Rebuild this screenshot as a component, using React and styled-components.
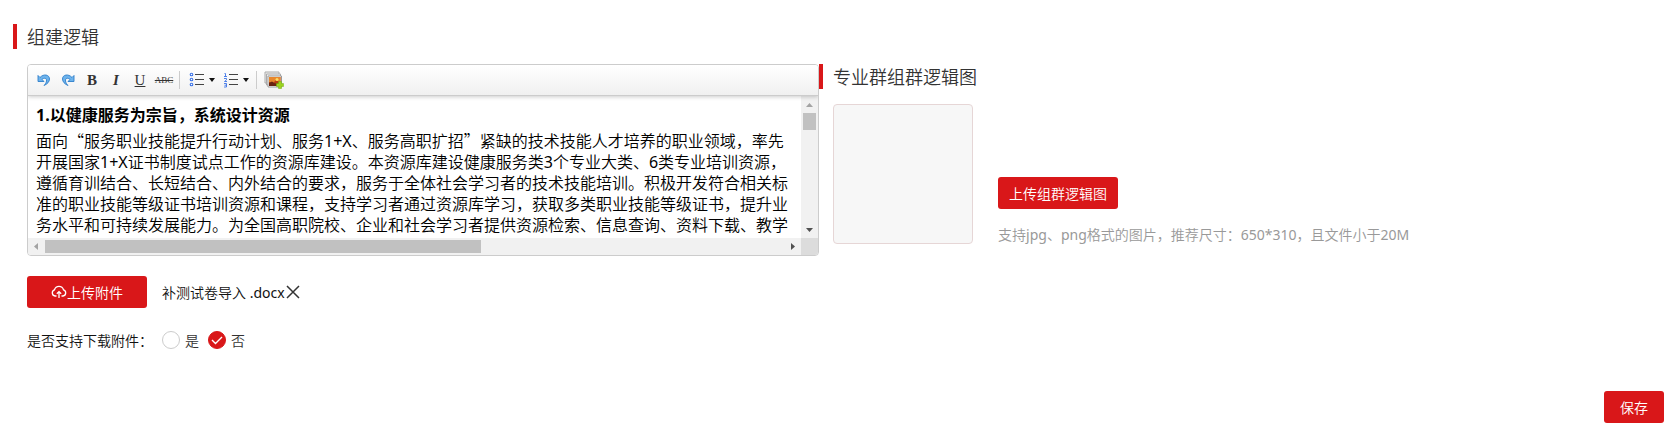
import React, { useState } from "react";
import styled, { createGlobalStyle } from "styled-components";

const lines = [
  "面向“服务职业技能提升行动计划、服务1+X、服务高职扩招”紧缺的技术技能人才培养的职业领域，率先",
  "开展国家1+X证书制度试点工作的资源库建设。本资源库建设健康服务类3个专业大类、6类专业培训资源，",
  "遵循育训结合、长短结合、内外结合的要求，服务于全体社会学习者的技术技能培训。积极开发符合相关标",
  "准的职业技能等级证书培训资源和课程，支持学习者通过资源库学习，获取多类职业技能等级证书，提升业",
  "务水平和可持续发展能力。为全国高职院校、企业和社会学习者提供资源检索、信息查询、资料下载、教学",
];

// the Chinese text is set a little lighter than the latin runs inside it
const mixed = (text) =>
  text
    .split(/([\x20-\x7e]+)/)
    .map((part, i) => (i % 2 ? <Latin key={i}>{part}</Latin> : part));

const UndoIcon = () => (
  <svg width="14" height="14" viewBox="0 0 14 14">
    <path
      d="M1 2.500v6h6L5 6.500c2-2 5-1.500 4.500 1.500-.2 1.500-1 3-2.500 4.500 3.500-1.500 5.500-4 5.500-6.500 0-4.500-6-5.500-9.500-1.500z"
      fill="#6db3ec"
      stroke="#2f7fcb"
      strokeWidth="0.9"
      strokeLinejoin="round"
    />
  </svg>
);

const RedoIcon = () => (
  <svg width="14" height="14" viewBox="0 0 14 14">
    <path
      d="M13 2.500v6H7l2-2C7 4.500 4 5 4.500 8c.2 1.500 1 3 2.500 4.500C3.500 11 1.500 8.500 1.500 6 1.500 1.500 7.500.5 11 4.500z"
      fill="#6db3ec"
      stroke="#2f7fcb"
      strokeWidth="0.9"
      strokeLinejoin="round"
    />
  </svg>
);

const BulletIcon = () => (
  <svg width="16" height="16" viewBox="0 0 16 16">
    {[3, 8, 13].map((y) => (
      <g key={y}>
        <circle cx="2.500" cy={y - 0.5} r="1.300" fill="#fff" stroke="#3d74e8" strokeWidth="1.100" />
        <path d={`M6 ${y - 0.5}h9`} stroke="#444" />
      </g>
    ))}
  </svg>
);

const NumberIcon = () => (
  <svg width="16" height="16" viewBox="0 0 16 16" fill="none">
    <path d="M6 2.500h9M6 7.500h9M6 12.500h9" stroke="#444" />
    <path
      d="M1.500 1.500h1v3M1 4.500h3M1 6.500h2.500v1.300L1.500 9.500H4M1 11.500h2.500v3.500H1M1.500 13.200h2"
      stroke="#3d74e8"
      strokeWidth="0.900"
    />
  </svg>
);

const ImageIcon = () => (
  <svg width="20" height="18" viewBox="0 0 20 18">
    <path d="M1 1h14v11H1z" fill="#eee" stroke="#aaa" />
    <path d="M2.500 3h14v11h-14z" fill="#eee" stroke="#aaa" />
    <path d="M4 5h13.500v11H4z" fill="#fff" stroke="#999" />
    <path d="M5 6h11.500v9H5z" fill="#b63d12" />
    <path d="M5 6h11.500v5L12 9l-3 3-4-1z" fill="#e8872c" />
    <circle cx="13" cy="8.500" r="1.500" fill="#ffdc63" />
    <path d="M5 12l3-1.500 3 2 5.500-1V15H5z" fill="#692411" />
    <path d="M14.500 10.500h3v2h2v3h-2v2h-3v-2h-2v-3h2z" fill="#9bd41d" stroke="#74ad13" strokeWidth="0.500" />
  </svg>
);

const CaretIcon = () => (
  <svg width="6" height="4" viewBox="0 0 6 4">
    <path d="M0 0h6L3 4z" fill="#111" />
  </svg>
);

const CloudIcon = () => (
  <svg width="16" height="16" viewBox="0 0 16 16" fill="none" stroke="#fff" strokeWidth="1.300">
    <path d="M5.500 12H4A3.200 3.200 0 0 1 3.500 5.800a4.700 4.700 0 0 1 9 0A3.200 3.200 0 0 1 12 12h-1.500" />
    <path d="M8 14V8M5.800 9.800L8 7.600l2.200 2.200" />
  </svg>
);

const CloseIcon = () => (
  <svg width="14" height="14" viewBox="0 0 14 14" stroke="#333" strokeWidth="1.500">
    <path d="M1 1l12 12M13 1L1 13" />
  </svg>
);

const Arrow = ({ d, color }) => (
  <svg width="17" height="17" viewBox="0 0 17 17">
    <path d={d} fill={color} />
  </svg>
);

const Editor = () => (
  <EditorBox>
    <Toolbar>
      <Tool aria-label="撤销"><UndoIcon /></Tool>
      <Tool aria-label="重做"><RedoIcon /></Tool>
      <Tool $weight="bold">B</Tool>
      <Tool $weight="bold" $slant="italic">I</Tool>
      <Tool $line="underline">U</Tool>
      <Tool $line="line-through" $size="9px">ABC</Tool>
      <Separator />
      <Tool aria-label="无序列表"><BulletIcon /></Tool>
      <Caret aria-label="无序列表样式"><CaretIcon /></Caret>
      <Tool aria-label="有序列表"><NumberIcon /></Tool>
      <Caret aria-label="有序列表样式"><CaretIcon /></Caret>
      <Separator />
      <Tool aria-label="多图上传"><ImageIcon /></Tool>
    </Toolbar>
    <Viewport>
      <Document>
        <h4>1.以健康服务为宗旨，系统设计资源</h4>
        {lines.map((line) => (
          <p key={line}>{mixed(line)}</p>
        ))}
      </Document>
      <VerticalBar>
        <Arrow d="M5 11h7L8.500 7z" color="#a3a3a3" />
        <VerticalThumb />
        <Arrow d="M5 7h7l-3.500 4z" color="#505050" />
      </VerticalBar>
      <HorizontalBar>
        <Arrow d="M10 5v7L6 8.500z" color="#a3a3a3" />
        <HorizontalTrack>
          <HorizontalThumb />
        </HorizontalTrack>
        <Arrow d="M7 5v7l4-3.500z" color="#505050" />
      </HorizontalBar>
      <Corner />
    </Viewport>
  </EditorBox>
);

const App = () => {
  const [download, setDownload] = useState("否");

  return (
    <Page lang="zh-CN">
      <GlobalStyle />
      <Title>组建逻辑</Title>
      <Columns>
        <div>
          <Editor />
          <FileRow>
            <RedButton $width="120px">
              <CloudIcon />
              上传附件
            </RedButton>
            <FileName>
              <span>{mixed("补测试卷导入 .docx")}</span>
              <Remove aria-label="删除附件"><CloseIcon /></Remove>
            </FileName>
          </FileRow>
          <RadioRow>
            <legend>是否支持下载附件：</legend>
            {["是", "否"].map((value) => (
              <RadioLabel key={value}>
                <RadioMark>
                  <input
                    type="radio"
                    name="download"
                    value={value}
                    checked={download === value}
                    onChange={() => setDownload(value)}
                  />
                  {download === value && (
                    <svg width="18" height="18" viewBox="0 0 18 18" fill="none">
                      <path d="M4 9l3.500 3.500L14 6" stroke="#fff" strokeWidth="1.400" />
                    </svg>
                  )}
                </RadioMark>
                {value}
              </RadioLabel>
            ))}
          </RadioRow>
        </div>
        <div>
          <Title>专业群组群逻辑图</Title>
          <DiagramRow>
            <Preview />
            <UploadCol>
              <RedButton $width="120px">上传组群逻辑图</RedButton>
              <Hint>{mixed("支持jpg、png格式的图片，推荐尺寸：650*310，且文件小于20M")}</Hint>
            </UploadCol>
          </DiagramRow>
        </div>
      </Columns>
      <Footer>
        <RedButton $width="60px">保存</RedButton>
      </Footer>
    </Page>
  );
};

/* Start Styling */
const GlobalStyle = createGlobalStyle`
  * {
    box-sizing: border-box;
  }
  body {
    margin: 0;
    background: #fff;
    color: #111;
    font-family: "Noto Sans CJK SC", sans-serif;
    font-size: 14px;
    font-weight: 350;
    line-height: 20px;
  }
  button {
    padding: 0;
    border: 0;
    background: none;
    font: inherit;
    cursor: pointer;
  }
  svg {
    display: block;
    flex: none;
  }
`;
const Page = styled.main`
  padding: 24px 9px 16px 13px;
`;
const Latin = styled.span`
  font-family: "Noto Sans", sans-serif;
  font-weight: 400;
  line-height: 1;
`;
const Title = styled.h3`
  margin: 0;
  padding-left: 10px;
  border-left: 4px solid #d91719;
  color: #333;
  font-size: 18px;
  font-weight: 350;
  line-height: 25px;
`;
const Columns = styled.div`
  display: grid;
  grid-template-columns: 15fr 16fr;
  margin-top: 15px;
  padding-left: 14px;
`;
const EditorBox = styled.div`
  border: 1px solid #ccc;
  border-radius: 4px;
  overflow: hidden;
`;
const Toolbar = styled.div`
  display: flex;
  align-items: center;
  height: 31px;
  padding-left: 4px;
  border-bottom: 1px solid #ccc;
  background: linear-gradient(#fff, #f0f0f0);
  box-shadow: 0 1px 4px rgba(0, 0, 0, 0.2);
  position: relative;
`;
const Tool = styled.button`
  display: flex;
  align-items: center;
  justify-content: center;
  width: 24px;
  height: 24px;
  && {
    color: #333;
    font-family: "Liberation Serif", serif;
    font-size: ${(props) => props.$size || "15px"};
    font-weight: ${(props) => props.$weight || "normal"};
    font-style: ${(props) => props.$slant || "normal"};
    text-decoration: ${(props) => props.$line || "none"};
  }
`;
const Caret = styled.button`
  width: 10px;
  height: 24px;
  display: flex;
  align-items: center;
`;
const Separator = styled.span`
  width: 1px;
  height: 18px;
  margin: 0 5px 0 3px;
  background: #ccc;
`;
const Viewport = styled.div`
  display: grid;
  grid-template-columns: minmax(0, 1fr) 17px;
  grid-template-rows: 142px 17px;
`;
const Document = styled.div`
  padding: 9px 8px 0;
  overflow: hidden;
  color: #000;
  font-size: 16px;
  line-height: 21px;
  white-space: nowrap;
  h4 {
    margin: 0 0 4px;
    font-family: "Noto Sans", "Noto Sans CJK SC", sans-serif;
    font-size: 16px;
  }
  p {
    margin: 0;
  }
`;
const VerticalBar = styled.div`
  display: flex;
  flex-direction: column;
  background: #f1f1f1;
  svg:last-child {
    margin-top: auto;
  }
`;
const VerticalThumb = styled.div`
  height: 17px;
  margin: 0 2px;
  background: #c1c1c1;
`;
const HorizontalBar = styled.div`
  display: flex;
  background: #f1f1f1;
`;
const HorizontalTrack = styled.div`
  flex: 1;
  padding: 2px 0;
`;
const HorizontalThumb = styled.div`
  width: 59%;
  height: 13px;
  background: #c1c1c1;
`;
const Corner = styled.div`
  background: #dcdcdc;
`;
const FileRow = styled.div`
  display: flex;
  align-items: center;
  gap: 15px;
  margin-top: 20px;
`;
const RedButton = styled.button`
  && {
    display: flex;
    align-items: center;
    justify-content: center;
    width: ${(props) => props.$width};
    height: 32px;
    border-radius: 3px;
    background: #d91719;
    color: #fff;
    white-space: nowrap;
  }
`;
const FileName = styled.span`
  display: flex;
  align-items: center;
  gap: 1px;
`;
const Remove = styled.button`
  width: 14px;
  height: 14px;
`;
const RadioRow = styled.fieldset`
  display: flex;
  align-items: center;
  margin: 22px 0 0;
  padding: 0;
  border: 0;
  line-height: 20px;
  legend {
    float: left;
    width: 135px;
    padding: 0;
  }
`;
const RadioLabel = styled.label`
  display: flex;
  align-items: center;
  gap: 5px;
  margin-right: 9px;
  color: #333;
`;
const RadioMark = styled.span`
  display: grid;
  input,
  svg {
    grid-area: 1 / 1;
  }
  svg {
    pointer-events: none;
  }
  input {
    appearance: none;
    width: 18px;
    height: 18px;
    margin: 0;
    border: 1px solid #ccc;
    border-radius: 50%;
  }
  input:checked {
    border-color: #d91719;
    background: #d91719;
  }
`;
const DiagramRow = styled.div`
  display: flex;
  align-items: flex-end;
  gap: 25px;
  margin-top: 15px;
  padding-left: 14px;
`;
const Preview = styled.div`
  flex: none;
  width: 140px;
  height: 140px;
  border: 1px solid #e6d6d6;
  border-radius: 4px;
  background: #f7f7f7;
`;
const UploadCol = styled.div`
  display: flex;
  flex-direction: column;
  gap: 15px;
`;
const Hint = styled.p`
  margin: 0;
  color: #999;
  line-height: 20px;
`;
const Footer = styled.footer`
  display: flex;
  justify-content: flex-end;
  margin-top: 41px;
`;
/* End Styling */

export default App;
